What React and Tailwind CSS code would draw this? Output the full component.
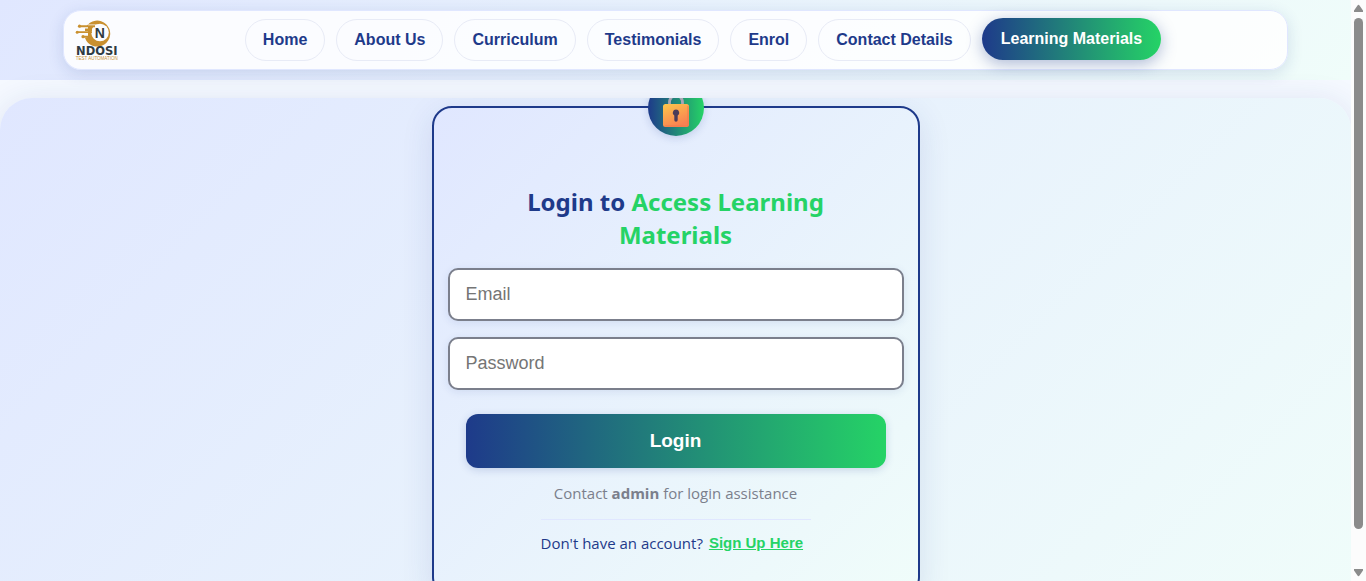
import React from "react";

const links = ["Home", "About Us", "Curriculum", "Testimonials", "Enrol", "Contact Details"];

function Logo() {
  return (
    <svg viewBox="0 0 44 42" className="h-[42px] w-11 shrink-0" role="img" aria-label="Ndosi Test Automation">
      <path d="M11 8A13 13 0 1 1 10 19L13 18V8z" fill="#c9902f" />
      <circle cx="25" cy="13.500" r="8.800" fill="#fbfcff" />
      <path d="M13 5.500h14l2 1.500H13z" fill="#fbfcff" />
      <path d="M4 6.200h16v2H4zM10 9.500h7v2.500h-7zM2 12.300h15v1.800H2zM8 16.700h9v2H8z" fill="#c9902f" />
      <g fill="#c9902f">
        <circle cx="4.500" cy="7.200" r="1.600" />
        <circle cx="2.200" cy="13.200" r="1.500" />
        <circle cx="8" cy="17.700" r="1.600" />
      </g>
      <text x="24.700" y="18.700" textAnchor="middle" fontFamily="Liberation Sans, sans-serif" fontWeight="700" fontSize="14" fill="#2f3b42">N</text>
      <text x="21.800" y="36" textAnchor="middle" fontFamily="DejaVu Sans, sans-serif" fontWeight="700" fontSize="11.500" fill="#2f3b42">NDOSI</text>
      <text x="21.800" y="40.800" textAnchor="middle" fontFamily="Liberation Sans, sans-serif" fontSize="4.500" fill="#c9902f">TEST AUTOMATION</text>
    </svg>
  );
}

function Lock() {
  return (
    <svg viewBox="0 0 28 36" className="mt-2 h-9 w-7" aria-hidden="true">
      <defs>
        <linearGradient id="lockBody" x1="0" y1="0" x2="0.500" y2="1">
          <stop offset="0" stopColor="#fdc84b" />
          <stop offset="1" stopColor="#f98152" />
        </linearGradient>
      </defs>
      <path d="M7.500 12V8a6.500 6.500 0 0 1 13 0v4" fill="none" stroke="#aaa5b4" strokeWidth="2.800" />
      <rect x="1" y="10" width="26" height="23" rx="2.500" fill="url(#lockBody)" />
      <path d="M26 12v18.500a1.500 1.500 0 0 1-1.500 1.500H3" fill="none" stroke="#f17b4d" strokeWidth="1" />
      <path d="M14 15.500a3.300 3.300 0 0 1 1.700 6.100V26a1.700 1.700 0 0 1-3.400 0v-4.400A3.300 3.300 0 0 1 14 15.500z" fill="#4b3c59" />
    </svg>
  );
}

function Header() {
  return (
    <header className="bg-linear-135/srgb from-[#e0e7ff] to-[#f0fdfa] px-[63px] py-[10px]">
      <div className="flex h-[60px] items-center rounded-[18px] border border-[#e0e7ff] bg-white/85 pl-[11px] shadow-[0_4px_16px_rgba(30,58,138,0.14)]">
        <Logo />
        <nav className="flex flex-1 items-center justify-center gap-[11px] text-base font-bold whitespace-nowrap">
          {links.map((label) => (
            <a key={label} href="#" className="flex h-[42px] items-center rounded-full border border-[#e8ebf6] px-[17px] text-[#1e3a8a]">
              {label}
            </a>
          ))}
          <button type="button" className="mb-[2px] h-[42px] rounded-full bg-linear-to-r/srgb from-[#1e3a8a] to-[#25d366] px-[19px] text-white shadow-[0_4px_16px_rgba(30,58,138,0.35)]">
            Learning Materials
          </button>
        </nav>
      </div>
    </header>
  );
}

function LoginCard() {
  const field =
    "h-[53px] w-full rounded-[10px] border-2 border-[#7b7f8c] bg-white px-4 text-lg text-[#1e3a8a] shadow-[0_2px_8px_rgba(30,58,138,0.1)] placeholder:text-[#757575]";
  return (
    <form
      onSubmit={(e) => e.preventDefault()}
      className="relative mx-auto w-full max-w-[488px] rounded-[20px] border-2 border-[#1e3a8a] bg-linear-135/srgb from-[#e0e7ff] to-[#f0fdfa] px-[14px] pt-[77px] pb-10 shadow-[0_8px_32px_rgba(30,58,138,0.12)]"
    >
      <div className="absolute -top-7 left-1/2 flex size-14 -translate-x-1/2 items-center justify-center rounded-full bg-linear-to-r/srgb from-[#1e3a8a] to-[#25d366] shadow-[0_2px_8px_rgba(30,58,138,0.18)]">
        <Lock />
      </div>
      <h1 className="mx-auto mb-[17px] max-w-[340px] text-center font-['Noto_Sans','Open_Sans',sans-serif] text-2xl leading-[33px] font-bold text-[#1e3a8a]">
        Login to <span className="text-[#25d366]">Access Learning Materials</span>
      </h1>
      <div className="flex flex-col gap-4">
        <input type="email" aria-label="Email" placeholder="Email" className={field} />
        <input type="password" aria-label="Password" placeholder="Password" className={field} />
      </div>
      <div className="mt-6 px-[18px]">
        <button type="submit" className="h-[54px] w-full rounded-xl bg-linear-to-r/srgb from-[#1e3a8a] to-[#25d366] text-[19px] font-bold text-white shadow-[0_2px_8px_rgba(30,58,138,0.18)]">
          Login
        </button>
      </div>
      <p className="mt-[13px] text-center font-['Open_Sans','Noto_Sans',sans-serif] text-[15px] leading-6 text-[#7b7f8c]">
        Contact <strong>admin</strong> for login assistance
      </p>
      <div className="mx-auto mt-[14px] flex w-[270px] items-center gap-[6px] border-t border-[#e0e7ff] pt-[11px] whitespace-nowrap">
        <span className="font-['Open_Sans','Noto_Sans',sans-serif] text-[15px] leading-6 text-[#1e3a8a]">Don't have an account?</span>
        <a href="#" className="text-[15px] font-bold text-[#25d366] underline">Sign Up Here</a>
      </div>
    </form>
  );
}

function ScrollRail() {
  return (
    <div className="flex w-[15px] shrink-0 flex-col items-center bg-[#fcfcfc] py-1" aria-hidden="true">
      <svg viewBox="0 0 9 8" className="h-2 w-[9px]"><path d="M3.500 1.500Q4.500 0 5.500 1.500L9 6.500V8H0V6.500z" fill="#8b8b8b" /></svg>
      <div className="mt-[6px] mb-10 w-[9px] flex-1 rounded-full bg-[#8b8b8b]" />
      <svg viewBox="0 0 9 8" className="h-2 w-[9px]"><path d="M3.500 6.500Q4.500 8 5.500 6.500L9 1.500V0H0v1.500z" fill="#8b8b8b" /></svg>
    </div>
  );
}

export default function App() {
  return (
    <div className="flex h-screen overflow-hidden font-['Liberation_Sans',Arial,sans-serif]">
      <div className="min-w-0 flex-1 overflow-hidden bg-[#f5f9ff]">
        <Header />
        <main className="mt-[18px] rounded-[32px] shadow-[0_4px_32px_rgba(30,58,138,0.12)]">
          <section className="overflow-hidden rounded-[32px] bg-linear-135/srgb from-[#e0e7ff] to-[#f0fdfa] px-4 pt-2 pb-8">
            <LoginCard />
          </section>
        </main>
      </div>
      <ScrollRail />
    </div>
  );
}
